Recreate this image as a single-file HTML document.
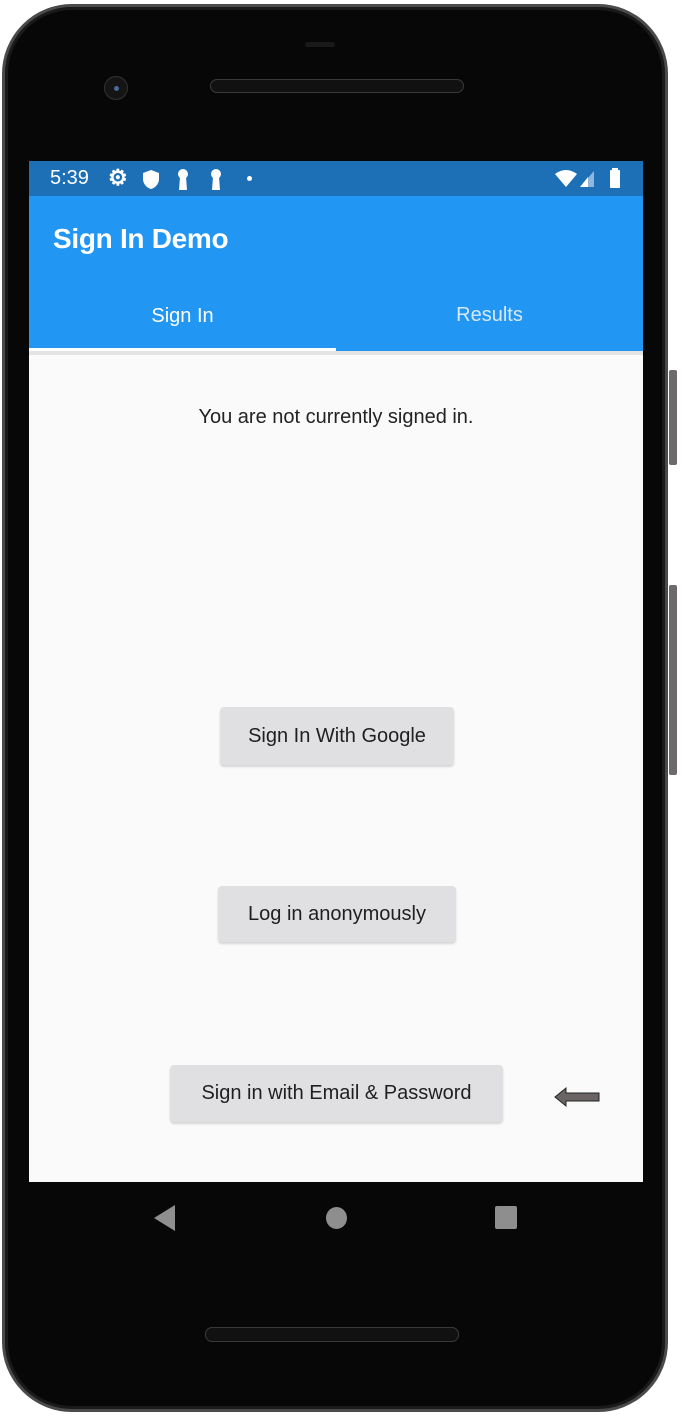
<!DOCTYPE html>
<html><head><meta charset="utf-8"><style>
*{margin:0;padding:0;box-sizing:border-box}
body{width:682px;height:1422px;background:#fff;position:relative;overflow:hidden;font-family:"Liberation Sans",sans-serif}
.phone{position:absolute;left:2px;top:4px;width:666px;height:1408px;background:#070707;border-radius:70px;border:3px solid #4a4a4a;box-shadow:inset 0 0 0 3px #1a1a1a}
.btnside{position:absolute;left:669px;width:8px;background:#6e6a6a;border-radius:2px}
.screen{position:absolute;left:29px;top:161px;width:614px;height:1021px;background:#fafafa;overflow:hidden}
.status{position:absolute;left:0;top:0;width:614px;height:35px;background:#1d6fb6;color:#fff}
.appbar{position:absolute;left:0;top:35px;width:614px;height:155px;background:#2196f3;color:#fff}
.btn{position:absolute;background:#e0e0e2;border-radius:4px;box-shadow:0 2px 2px rgba(0,0,0,.15);font-size:19px;color:#1f1f1f;display:flex;align-items:center;justify-content:center}
</style></head><body>
<div class="phone"></div>
<div class="btnside" style="top:370px;height:95px"></div>
<div class="btnside" style="top:585px;height:190px"></div>
<div style="position:absolute;left:305px;top:42px;width:30px;height:5px;background:#1a1a1a;border-radius:3px"></div>
<div style="position:absolute;left:104px;top:76px;width:24px;height:24px;border-radius:50%;background:#151515;border:1px solid #333"><div style="position:absolute;left:9px;top:9px;width:5px;height:5px;border-radius:50%;background:#4a6a9a"></div></div>
<div style="position:absolute;left:210px;top:79px;width:254px;height:14px;border-radius:7px;background:#111;border:1px solid #3a3a3a"></div>
<div style="position:absolute;left:205px;top:1327px;width:254px;height:15px;border-radius:7px;background:#111;border:1px solid #3a3a3a"></div>
<div class="screen">
 <div class="status">
  <span style="position:absolute;left:21px;top:6px;font-size:20px">5:39</span>
  <span style="position:absolute;left:79px;top:4px;font-size:22px;font-weight:bold">⚙</span>
  <svg style="position:absolute;left:114px;top:9px" width="16" height="19" viewBox="0 0 16 19"><path d="M8 0L16 3v6c0 5-4 9-8 10C4 18 0 14 0 9V3z" fill="#fff"/></svg>
  <svg style="position:absolute;left:148px;top:8px" width="12" height="21" viewBox="0 0 12 21"><circle cx="6" cy="5" r="5" fill="#fff"/><path d="M3 8h6l1 13H2z" fill="#fff"/></svg>
  <svg style="position:absolute;left:181px;top:8px" width="12" height="21" viewBox="0 0 12 21"><circle cx="6" cy="5" r="5" fill="#fff"/><path d="M3 8h6l1 13H2z" fill="#fff"/></svg>
  <div style="position:absolute;left:218px;top:15px;width:5px;height:5px;border-radius:50%;background:#fff"></div>
  <svg style="position:absolute;left:526px;top:9px" width="22" height="17" viewBox="0 0 22 17"><path d="M0 4Q11-4 22 4L11 17z" fill="#fff"/></svg>
  <svg style="position:absolute;left:551px;top:10px" width="14" height="16" viewBox="0 0 14 16"><path d="M14 0V16H0z" fill="#fff" opacity=".5"/><path d="M8 6V16H0z" fill="#fff"/></svg>
  <div style="position:absolute;left:581px;top:9px;width:10px;height:18px;background:#fff;border-radius:1px"></div>
  <div style="position:absolute;left:583px;top:7px;width:6px;height:3px;background:#fff"></div>
 </div>
 <div class="appbar">
  <div style="position:absolute;left:24px;top:27px;font-size:28px;font-weight:bold;letter-spacing:-0.3px">Sign In Demo</div>
  <div style="position:absolute;left:0;top:109px;width:307px;text-align:center;font-size:20px">Sign In</div>
  <div style="position:absolute;left:307px;top:108px;width:307px;text-align:center;font-size:20px;color:#d6e9fb">Results</div>
  <div style="position:absolute;left:0;top:152px;width:307px;height:3px;background:#fff"></div>
 </div>
 <div style="position:absolute;left:0;top:190px;width:614px;height:4px;background:#e4e4e4"></div>
 <div style="position:absolute;left:0;top:245px;width:614px;text-align:center;font-size:20px;color:#222">You are not currently signed in.</div>
 <div class="btn" style="left:191px;top:546px;width:234px;height:58px;font-size:20px">Sign In With Google</div>
 <div class="btn" style="left:189px;top:725px;width:238px;height:56px;font-size:20px">Log in anonymously</div>
 <div class="btn" style="left:141px;top:904px;width:333px;height:57px;font-size:20px">Sign in with Email &amp; Password</div>
 <svg style="position:absolute;left:524px;top:925px" width="48" height="22" viewBox="0 0 48 22"><path d="M2 11L13 2V7H46V15H13V20z" fill="#6a6464" stroke="#222" stroke-width="1"/></svg>
</div>
<svg style="position:absolute;left:154px;top:1205px" width="22" height="26" viewBox="0 0 22 26"><path d="M21 0V26L0 13z" fill="#8e8e8e"/></svg>
<div style="position:absolute;left:326px;top:1207px;width:21px;height:22px;border-radius:50%;background:#8e8e8e"></div>
<div style="position:absolute;left:495px;top:1206px;width:22px;height:23px;border-radius:2px;background:#8e8e8e"></div>
</body></html>
